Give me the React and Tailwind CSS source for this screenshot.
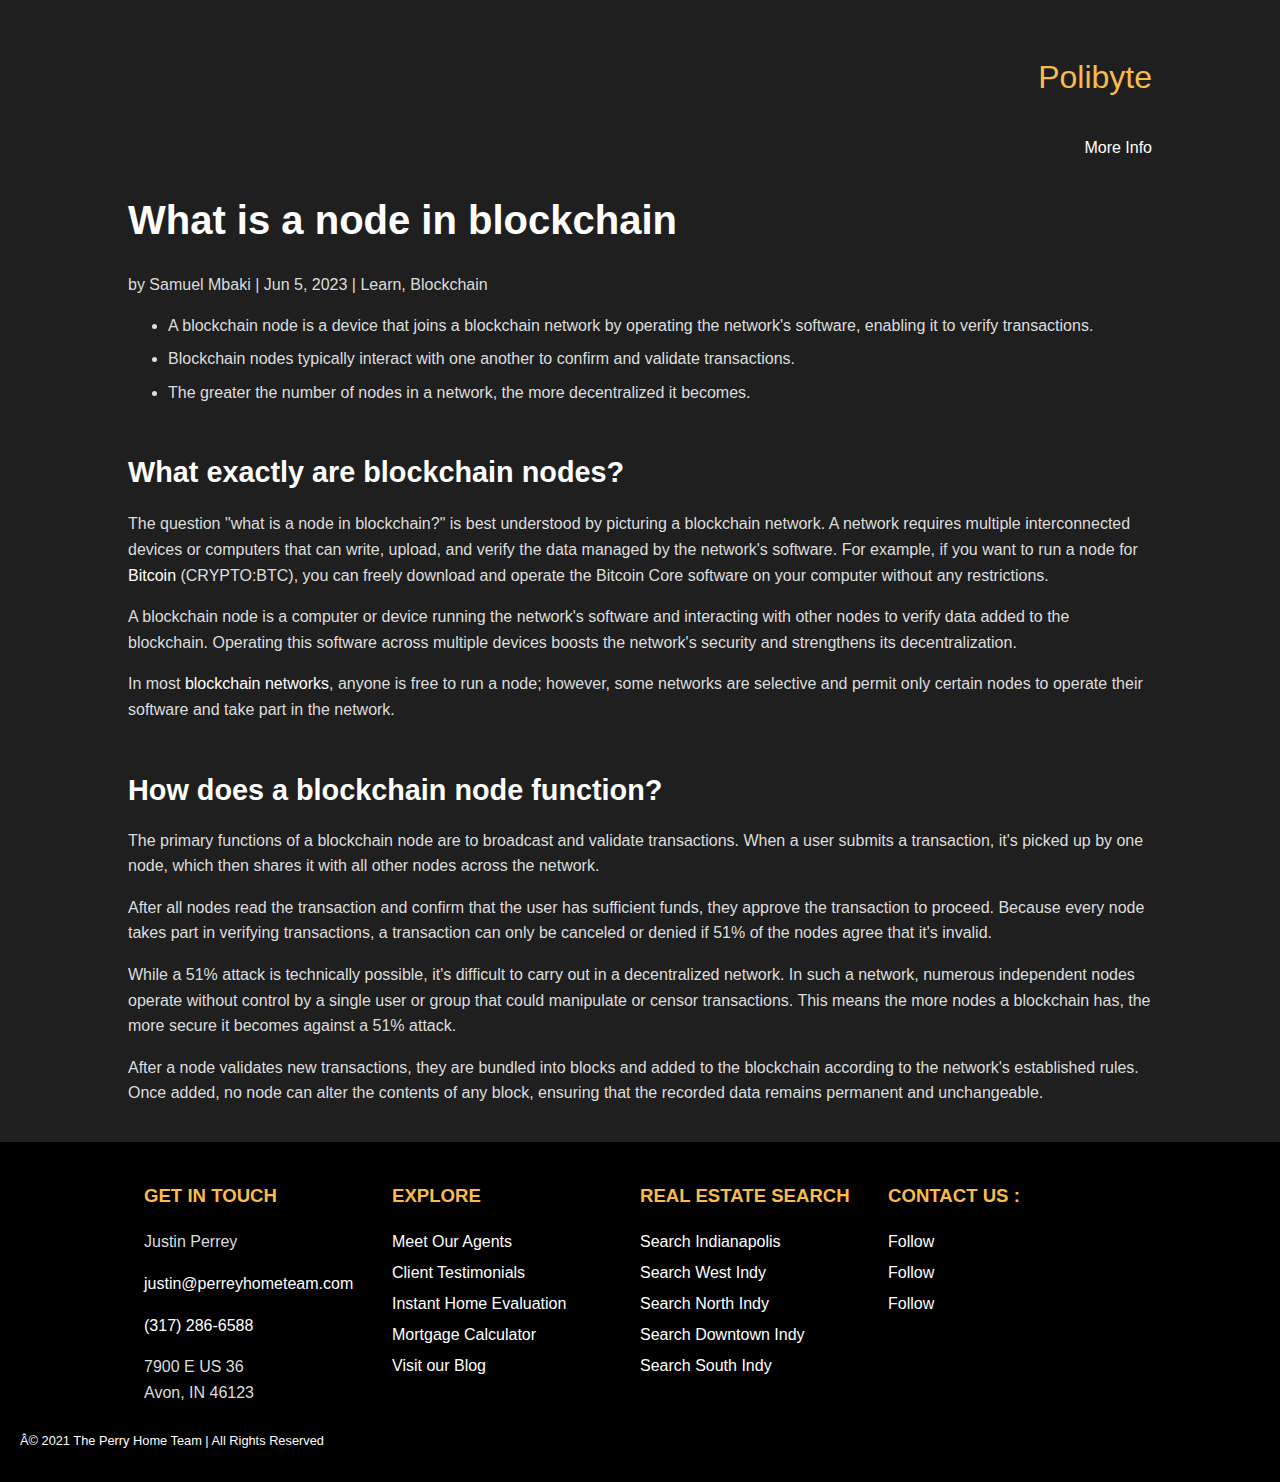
export default function App() {
  const font = { fontFamily: '"Liberation Sans", Arial, sans-serif' };
  return (
    <div style={font} className="bg-[#1f1f1f] text-[#dddddd] text-[16px] leading-[1.6] min-h-screen flex flex-col">
      <header className="mx-auto w-[1024px] pt-[56px] flex flex-col items-end">
        <div className="text-[32px] leading-[42px] text-[#f8bb4c]">Polibyte</div>
        <nav className="mt-[40px] text-white text-[16px] leading-[20px]">More Info</nav>
      </header>
      <main className="mx-auto w-[1024px] pt-[34px] pb-[36px]">
        <h1 className="text-[40px] leading-[56px] font-bold text-white">What is a node in blockchain</h1>
        <p className="mt-[24px] mb-[15px]">by Samuel Mbaki | Jun 5, 2023 | Learn, Blockchain</p>
        <ul className="list-disc pl-[40px] space-y-[8px]">
          <li>A blockchain node is a device that joins a blockchain network by operating the network's software, enabling it to verify transactions.</li>
          <li>Blockchain nodes typically interact with one another to confirm and validate transactions.</li>
          <li>The greater the number of nodes in a network, the more decentralized it becomes.</li>
        </ul>
        <h2 className="mt-[49px] mb-[21px] text-[28.8px] leading-[36px] font-bold text-white">What exactly are blockchain nodes?</h2>
        <p className="mb-[16px]">The question "what is a node in blockchain?" is best understood by picturing a blockchain network. A network requires multiple interconnected devices or computers that can write, upload, and verify the data managed by the network's software. For example, if you want to run a node for <a className="text-white">Bitcoin</a> (CRYPTO:BTC), you can freely download and operate the Bitcoin Core software on your computer without any restrictions.</p>
        <p className="mb-[16px]">A blockchain node is a computer or device running the network's software and interacting with other nodes to verify data added to the blockchain. Operating this software across multiple devices boosts the network's security and strengthens its decentralization.</p>
        <p className="mb-[16px]">In most <a className="text-white">blockchain networks</a>, anyone is free to run a node; however, some networks are selective and permit only certain nodes to operate their software and take part in the network.</p>
        <h2 className="mt-[49px] mb-[20px] text-[28.8px] leading-[36px] font-bold text-white">How does a blockchain node function?</h2>
        <p className="mb-[16px]">The primary functions of a blockchain node are to broadcast and validate transactions. When a user submits a transaction, it's picked up by one node, which then shares it with all other nodes across the network.</p>
        <p className="mb-[16px]">After all nodes read the transaction and confirm that the user has sufficient funds, they approve the transaction to proceed. Because every node takes part in verifying transactions, a transaction can only be canceled or denied if 51% of the nodes agree that it's invalid.</p>
        <p className="mb-[16px]">While a 51% attack is technically possible, it's difficult to carry out in a decentralized network. In such a network, numerous independent nodes operate without control by a single user or group that could manipulate or censor transactions. This means the more nodes a blockchain has, the more secure it becomes against a 51% attack.</p>
        <p>After a node validates new transactions, they are bundled into blocks and added to the blockchain according to the network's established rules. Once added, no node can alter the contents of any block, ensuring that the recorded data remains permanent and unchangeable.</p>
      </main>
      <footer className="bg-black pt-[42px] pb-[33px] flex-1">
        <div className="mx-auto w-[992px] grid grid-cols-4">
          <div>
            <h4 className="text-[18.6px] leading-[24px] font-bold text-[#f8bb4c] mb-[21px]">GET IN TOUCH</h4>
            <p className="mb-[16px] leading-[26px]">Justin Perrey</p>
            <p className="mb-[16px] leading-[26px] text-white">justin@perreyhometeam.com</p>
            <p className="mb-[15px] leading-[26px] text-white">(317) 286-6588</p>
            <p className="leading-[26px]">7900 E US 36<br />Avon, IN 46123</p>
          </div>
          <div>
            <h4 className="text-[18.6px] leading-[24px] font-bold text-[#f8bb4c] mb-[21px]">EXPLORE</h4>
            <ul className="text-white leading-[31px] -mt-[3px]">
              <li>Meet Our Agents</li>
              <li>Client Testimonials</li>
              <li>Instant Home Evaluation</li>
              <li>Mortgage Calculator</li>
              <li>Visit our Blog</li>
            </ul>
          </div>
          <div>
            <h4 className="text-[18.6px] leading-[24px] font-bold text-[#f8bb4c] mb-[21px]">REAL ESTATE SEARCH</h4>
            <ul className="text-white leading-[31px] -mt-[3px]">
              <li>Search Indianapolis</li>
              <li>Search West Indy</li>
              <li>Search North Indy</li>
              <li>Search Downtown Indy</li>
              <li>Search South Indy</li>
            </ul>
          </div>
          <div>
            <h4 className="text-[18.6px] leading-[24px] font-bold text-[#f8bb4c] mb-[21px]">CONTACT US :</h4>
            <ul className="text-white leading-[31px] -mt-[3px]">
              <li>Follow</li>
              <li>Follow</li>
              <li>Follow</li>
            </ul>
          </div>
        </div>
        <div className="mt-[27px] px-[20px] text-[12.8px] leading-[16px] text-white">Â© 2021 The Perry Home Team | All Rights Reserved</div>
      </footer>
    </div>
  );
}
